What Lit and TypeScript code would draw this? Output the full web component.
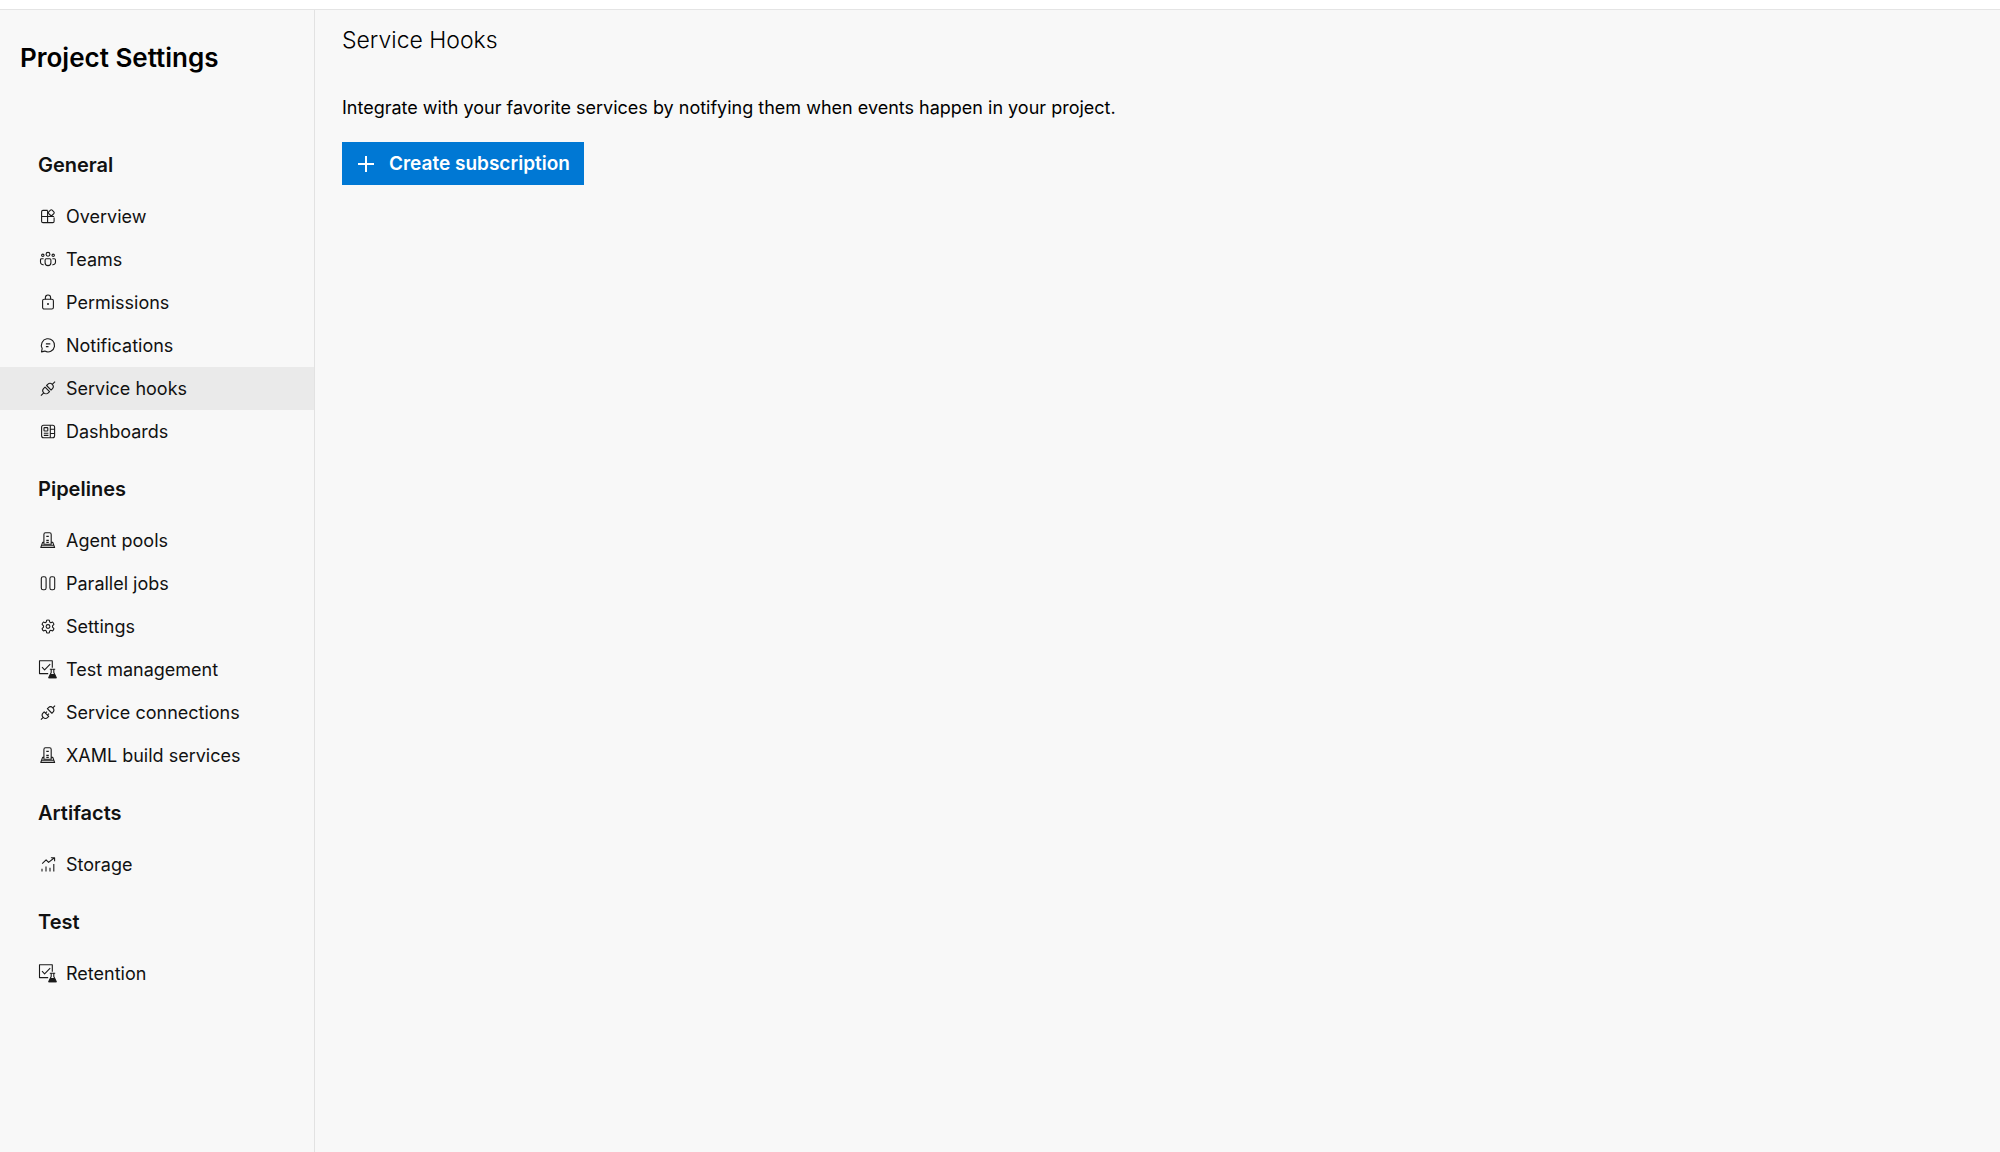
import { LitElement, html, svg, css } from "lit";
import type { SVGTemplateResult } from "lit";
import { customElement, property } from "lit/decorators.js";
import { classMap } from "lit/directives/class-map.js";

const server = svg`
  <path d="M5.9 14.2V4.4q0-1.6 1.6-1.6h4.1q1.6 0 1.6 1.6v9.8z" />
  <path d="M8.3 6.4h2.5M8.3 10.4h2.5M8.3 12.4h2.5" />
  <path d="M5.9 12.4H4.6L2.8 17.4h13.8l-1.8-5H13.2M3.6 15.3h12.2" />`;

const testBeaker = svg`
  <path d="M10.2 14.6H1.5V1.7h12.8v7" />
  <path d="M4 8.2l2.6 2.6 5.6-5.6" />
  <path d="M11.8 10.2h5.4M13.2 10.2v3.2l-2.4 5.2h7.4l-2.4-5.2v-3.2" />
  <path class="solid" d="M12.4 15h4.2l2 4.2h-8.2z" />`;

const icons: Record<string, SVGTemplateResult> = {
  overview: svg`
    <path d="M9.6 4.4H5q-1.4 0-1.4 1.4v9.4q0 1.4 1.4 1.4h9.7q1.4 0 1.4-1.4v-3.8M3.6 10.5h12.5M9.6 4.4v12.2" />
    <rect x="10.9" y="4.3" width="4.8" height="4.8" rx="1.2" transform="rotate(45 13.3 6.7)" />`,
  teams: svg`
    <circle cx="10" cy="5.3" r="1.9" /><circle cx="4.8" cy="6.3" r="1.2" /><circle cx="15.2" cy="6.3" r="1.2" />
    <path d="M8.3 9.7h3.4q1.2 0 1.2 1.2v2.8a2.9 2.9 0 0 1-5.8 0v-2.8q0-1.2 1.2-1.2z" />
    <path d="M5.6 9.7H3.7q-1.2 0-1.2 1.2v2.2a2.6 2.6 0 0 0 3.2 2.6M14.4 9.7h1.9q1.2 0 1.2 1.2v2.2a2.6 2.6 0 0 1-3.2 2.6" />`,
  lock: svg`
    <rect x="4.6" y="7.2" width="10.8" height="9.8" rx="1.6" />
    <path d="M7.4 7.2V5.6a2.6 2.6 0 0 1 5.2 0v1.6" />
    <circle class="solid" cx="10" cy="12" r="1" />`,
  chat: svg`
    <path d="M3.5 16.9l.7-3.4a6.6 6.6 0 1 1 2.6 2.6z" />
    <path d="M7.9 8.9h4.4M7.9 11.6h2.6" />`,
  plugJoined: svg`
    <g transform="rotate(-45 10 10.6)">
      <path d="M0 10.6h4M16 10.6H20" />
      <path d="M9 7.4v6.4H7.2a3.2 3.2 0 0 1 0-6.4zM11.2 7.4v6.4h1.6a3.2 3.2 0 0 0 0-6.4z" />
    </g>`,
  plug: svg`
    <g transform="rotate(-45 10 10.6)">
      <path d="M0 10.6h3.2M16.8 10.6H20" />
      <path d="M7.8 7.4v6.4H6.4a3.2 3.2 0 0 1 0-6.4zM12.3 7.4v6.4h1.3a3.2 3.2 0 0 0 0-6.4z" />
      <path d="M7.8 9.2h2.2M7.8 12h2.2" />
    </g>`,
  dashboard: svg`
    <rect x="3.6" y="4.2" width="13" height="12.6" rx="2" />
    <path d="M12.3 4.2v12.6M12.3 8.3h4.3M12.3 12.5h4.3M5.8 12.3h4.6M5.8 14.4h4.6" />
    <rect x="6" y="6.6" width="3.8" height="3.4" rx=".6" />`,
  server,
  parallel: svg`
    <rect x="3.3" y="3.7" width="4.8" height="13" rx="1.8" />
    <rect x="11.9" y="3.7" width="4.8" height="13" rx="1.8" />`,
  gear: svg`
    <path d="M8.7 4.2Q10 3.7 11.3 4.2L11.7 6.1 12.8 6.7 14.6 6.1Q15.7 7 15.9 8.4L14.5 9.8V11.2L15.9 12.6Q15.7 14 14.6 14.9L12.8 14.3 11.7 14.9 11.3 16.8Q10 17.3 8.7 16.8L8.3 14.9 7.2 14.3 5.4 14.9Q4.3 14 4.1 12.6L5.5 11.2V9.8L4.1 8.4Q4.3 7 5.4 6.1L7.2 6.7 8.3 6.1z" />
    <circle cx="10" cy="10.5" r="1.9" />`,
  testBeaker,
  chart: svg`
    <path d="M4 17.6v-2.9M8 17.6v-5.2M12 17.6v-3.9M15.8 17.6v-7.6M4.2 9.6 8.1 5.9l2.5 2.5 5.8-4.7M12.9 3.7h3.7v3.6" />`,
};

interface Entry {
  label: string;
  icon: string;
}

const groups: { title: string; entries: Entry[] }[] = [
  {
    title: "General",
    entries: [
      { label: "Overview", icon: "overview" },
      { label: "Teams", icon: "teams" },
      { label: "Permissions", icon: "lock" },
      { label: "Notifications", icon: "chat" },
      { label: "Service hooks", icon: "plugJoined" },
      { label: "Dashboards", icon: "dashboard" },
    ],
  },
  {
    title: "Pipelines",
    entries: [
      { label: "Agent pools", icon: "server" },
      { label: "Parallel jobs", icon: "parallel" },
      { label: "Settings", icon: "gear" },
      { label: "Test management", icon: "testBeaker" },
      { label: "Service connections", icon: "plug" },
      { label: "XAML build services", icon: "server" },
    ],
  },
  { title: "Artifacts", entries: [{ label: "Storage", icon: "chart" }] },
  { title: "Test", entries: [{ label: "Retention", icon: "testBeaker" }] },
];

@customElement("settings-nav")
export class SettingsNav extends LitElement {
  @property() current = "";

  static styles = css`
    :host {
      display: block;
    }
    .title {
      margin: 0;
      padding: 32px 20px 55px;
      font-size: 26px;
      line-height: 32px;
      font-weight: 600;
      color: #000;
    }
    .group-title {
      margin: 0;
      padding: 24px 38px 18px;
      font-size: 20px;
      line-height: 24px;
      font-weight: 600;
    }
    .list {
      margin: 0;
      padding: 0;
      list-style: none;
    }
    .link {
      display: flex;
      align-items: center;
      gap: 8px;
      height: 43px;
      padding: 0 38px;
      color: inherit;
      text-decoration: none;
      white-space: nowrap;
    }
    .link:hover,
    .selected {
      background: #eaeaea;
    }
    .icon {
      flex: none;
      width: 20px;
      height: 21px;
      fill: none;
      stroke: #1a1a1a;
      stroke-width: 1.1;
      stroke-linejoin: round;
    }
    .solid {
      fill: #1a1a1a;
      stroke: none;
    }
  `;

  render() {
    return html`
      <nav aria-label="Project settings">
        <h2 class="title">Project Settings</h2>
        ${groups.map(
          (group) => html`
            <h3 class="group-title">${group.title}</h3>
            <ul class="list">
              ${group.entries.map((entry) => this.renderEntry(entry))}
            </ul>
          `,
        )}
      </nav>
    `;
  }

  private renderEntry(entry: Entry) {
    const selected = entry.label === this.current;
    return html`
      <li>
        <a class=${classMap({ link: true, selected })} href="#" aria-current=${selected ? "page" : "false"}>
          <svg class="icon" viewBox="0 0 20 21" aria-hidden="true">${icons[entry.icon]}</svg>
          <span>${entry.label}</span>
        </a>
      </li>
    `;
  }
}

@customElement("app-root")
export class AppRoot extends LitElement {
  static styles = css`
    :host {
      display: flex;
      flex-direction: column;
      min-height: 100vh;
      background: #f8f8f8;
      color: #111;
      font-family: Inter, "Liberation Sans", sans-serif;
      font-size: 18px;
      line-height: 24px;
    }
    .topbar {
      height: 9px;
      background: #fff;
      border-bottom: 1px solid #e4e4e4;
    }
    .body {
      flex: 1;
      display: grid;
      grid-template-columns: auto 1fr;
    }
    .sidebar {
      box-sizing: border-box;
      width: 315px;
      border-right: 1px solid #e2e2e2;
    }
    .content {
      padding: 14px 27px;
      color: #000;
    }
    .heading {
      margin: 0;
      font-size: 23px;
      line-height: 32px;
      font-weight: 300;
    }
    .intro {
      margin: 40px 0 22px;
    }
    .create {
      display: inline-flex;
      align-items: center;
      gap: 14px;
      height: 43px;
      padding: 0 14px 0 15px;
      border: 0;
      background: #0078d4;
      color: #fff;
      font: inherit;
      font-size: 19px;
      font-weight: 600;
      cursor: pointer;
    }
    .plus {
      width: 18px;
      height: 18px;
      fill: none;
      stroke: #fff;
      stroke-width: 2;
    }
  `;

  render() {
    return html`
      <header class="topbar"></header>
      <div class="body">
        <aside class="sidebar"><settings-nav current="Service hooks"></settings-nav></aside>
        <main class="content">
          <h1 class="heading">Service Hooks</h1>
          <p class="intro">
            Integrate with your favorite services by notifying them when events happen in your project.
          </p>
          <button class="create" type="button">
            <svg class="plus" viewBox="0 0 18 18" aria-hidden="true"><path d="M9 1v16M1 9h16" /></svg>
            Create subscription
          </button>
        </main>
      </div>
    `;
  }
}
